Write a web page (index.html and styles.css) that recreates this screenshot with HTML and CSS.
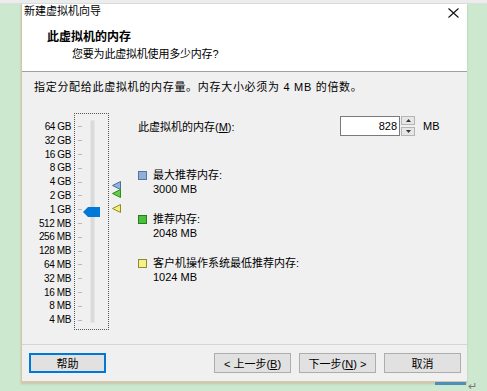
FILE: index.html
```html
<!DOCTYPE html>
<html lang="zh-CN">
<head>
  <meta charset="UTF-8">
  <title>新建虚拟机向导</title>
  <link rel="stylesheet" href="styles.css">
</head>
<body>
  <div class="topbar"></div>
  <div class="dialog">
    <div class="header">
      <div class="titlebar">
        <span class="title">新建虚拟机向导</span>
        <svg class="close" width="11" height="10" viewBox="0 0 11 10"><path d="M0.5 0.5 L10.5 9.5 M10.5 0.5 L0.5 9.5" stroke="#111" stroke-width="1.1" fill="none"/></svg>
      </div>
      <h1>此虚拟机的内存</h1>
      <p class="subtitle">您要为此虚拟机使用多少内存?</p>
    </div>

    <div class="body">
      <p class="intro">指定分配给此虚拟机的内存量。内存大小必须为 4 MB 的倍数。</p>
      <div class="memory">
        <ul class="scale">
          <li>64 GB</li><li>32 GB</li><li>16 GB</li><li>8 GB</li><li>4 GB</li>
          <li>2 GB</li><li>1 GB</li><li>512 MB</li><li>256 MB</li><li>128 MB</li>
          <li>64 MB</li><li>32 MB</li><li>16 MB</li><li>8 MB</li><li>4 MB</li>
        </ul>
        <div class="slider">
          <ul class="ticks">
            <li></li><li></li><li></li><li></li><li></li><li></li><li></li><li></li>
            <li></li><li></li><li></li><li></li><li></li><li></li><li></li>
          </ul>
          <div class="track"></div>
          <svg class="thumb" width="17" height="10" viewBox="0 0 17 10"><path d="M0 5 L5 0 H17 V10 H5 Z" fill="#0078d7"/></svg>
        </div>
        <div class="markers">
          <svg class="marker" style="top: 68px" width="9" height="9" viewBox="0 0 9 9"><path d="M0.5 4.5 L8.5 0.5 V8.5 Z" fill="#8fb4dc" stroke="#4a6f99"/></svg>
          <svg class="marker" style="top: 76px" width="9" height="9" viewBox="0 0 9 9"><path d="M0.5 4.5 L8.5 0.5 V8.5 Z" fill="#5fcf4a" stroke="#2f8a22"/></svg>
          <svg class="marker" style="top: 91px" width="9" height="9" viewBox="0 0 9 9"><path d="M0.5 4.5 L8.5 0.5 V8.5 Z" fill="#f2ee7a" stroke="#8e8a2a"/></svg>
        </div>
        <div class="settings">
          <div class="size-row">
            <label class="size-label">此虚拟机的内存(<u>M</u>):</label>
            <div class="spin">
              <span class="spin-value">828</span>
              <div class="spin-buttons">
                <span class="spin-btn">
                  <svg width="5" height="3" viewBox="0 0 5 3"><path d="M0 3 L2.5 0 L5 3 Z" fill="#333"/></svg>
                </span>
                <span class="spin-btn">
                  <svg width="5" height="3" viewBox="0 0 5 3"><path d="M0 0 L2.5 3 L5 0 Z" fill="#333"/></svg>
                </span>
              </div>
            </div>
            <span class="unit">MB</span>
          </div>
          <div class="legend">
            <div class="legend-item">
              <span class="swatch blue"></span>
              <div>最大推荐内存:<br>3000 MB</div>
            </div>
            <div class="legend-item">
              <span class="swatch green"></span>
              <div>推荐内存:<br>2048 MB</div>
            </div>
            <div class="legend-item">
              <span class="swatch yellow"></span>
              <div>客户机操作系统最低推荐内存:<br>1024 MB</div>
            </div>
          </div>
        </div>
      </div>
    </div>

    <div class="footer">
      <button class="btn focused">帮助</button>
      <span class="spacer"></span>
      <button class="btn">&lt; 上一步(<u>B</u>)</button>
      <button class="btn">下一步(<u>N</u>) &gt;</button>
      <button class="btn">取消</button>
    </div>
  </div>
  <div class="below">
    <span class="taskbar"></span>
    <span class="return">↵</span>
  </div>
</body>
</html>
```

FILE: styles.css
```css
body { margin: 0; background: #cce8cf; font-family: "Liberation Sans", "Noto Sans CJK SC", sans-serif; font-size: 11px; color: #000; }
ul { list-style: none; margin: 0; padding: 0; }
p, h1 { margin: 0; }

.topbar { height: 3px; background: #ececec; border-bottom: 1px solid #dedede; }

.dialog { width: 445px; margin-left: 21px; border-left: 1px solid #d6c4a8; border-bottom: 2px solid #d9c7ab; box-shadow: 0 1px 2px rgba(120,100,70,0.25); }

.header { height: 68px; background: #fff; border-bottom: 1px solid #a0a0a0; box-sizing: border-box; padding: 0 0 0 2px; }
.titlebar { display: flex; justify-content: space-between; align-items: center; height: 15px; padding-right: 8px; }
.title { font-size: 11px; line-height: 15px; }
.close { margin-top: 3px; }
.header h1 { font-size: 12px; font-weight: bold; margin: 10px 0 0 23px; line-height: 16px; }
.subtitle { margin: 2px 0 0 48px; font-size: 11px; line-height: 14px; letter-spacing: -0.2px; }

.body { height: 272px; background: #f0f0f0; box-sizing: border-box; padding: 8px 0 0 12px; }
.intro { font-size: 11px; line-height: 14px; letter-spacing: 0.7px; }

.memory { display: flex; margin-top: 19px; }
.scale { width: 37px; padding-top: 7px; text-align: right; font-size: 10px; letter-spacing: -0.4px; }
.scale li { height: 13.8px; line-height: 13.8px; }

.slider { position: relative; width: 33px; height: 215px; margin-left: 3px; border: 1px dotted #555; }
.ticks { padding: 6px 0 0 3px; }
.ticks li { height: 13.8px; display: flex; align-items: center; }
.ticks li::before { content: ""; width: 4px; height: 1px; background: #b8b8b8; }
.track { position: absolute; left: 15px; top: 6px; bottom: 6px; width: 3px; background: #dadada; border: 1px solid #e6e6e6; }
.thumb { position: absolute; left: 8px; top: 93px; }

.markers { position: relative; width: 10px; margin-left: 3px; }
.marker { position: absolute; left: 0; }

.settings { margin-left: 16px; flex: 1; }
.size-row { display: flex; align-items: center; margin-top: 3px; height: 20px; }
.size-label { width: 202px; }
.spin { display: flex; height: 20px; }
.spin-value { width: 56px; height: 18px; line-height: 18px; border: 1px solid #7a7a7a; background: #fff; text-align: right; padding-right: 2px; box-sizing: content-box; }
.spin-buttons { display: flex; flex-direction: column; justify-content: space-between; margin-left: 1px; width: 14px; }
.spin-btn { height: 9px; display: flex; align-items: center; justify-content: center; background: #e6e6e6; border: 1px solid #b5b5b5; box-sizing: border-box; }
.unit { margin-left: 8px; }

.legend { display: flex; flex-direction: column; gap: 16px; margin-top: 32px; }
.legend-item { display: flex; line-height: 14px; }
.swatch { width: 7px; height: 7px; margin: 3px 6px 0 0; border: 1px solid; }
.swatch.blue { background: #8eb0d8; border-color: #56769e; }
.swatch.green { background: #47c23a; border-color: #2a7a22; }
.swatch.yellow { background: #f4f08a; border-color: #8f8b2e; }

.footer { display: flex; align-items: flex-start; gap: 8px; height: 37px; box-sizing: border-box; padding: 8px 6px 0 7px; background: #f0f0f0; border-top: 1px solid #d5d5d5; }
.spacer { flex: 1; }
.btn { width: 77px; height: 20px; padding: 0; font: inherit; font-size: 11px; background: #e1e1e1; border: 1px solid #adadad; color: #000; }
.btn.focused { border: 2px solid #0078d7; }

.below { display: flex; justify-content: flex-end; align-items: flex-start; width: 487px; }
.taskbar { width: 31px; height: 3px; background: #4a90b8; margin-top: -1px; }
.return { width: 21px; font-size: 11px; color: #777; line-height: 10px; margin-top: -2px; padding-left: 2px; box-sizing: border-box; }
```
